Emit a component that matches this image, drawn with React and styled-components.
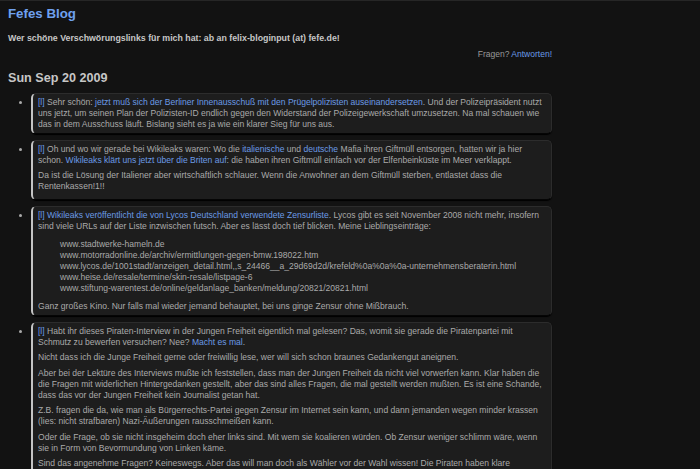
import React from 'react'
import styled, { createGlobalStyle } from 'styled-components'

const GlobalStyle = createGlobalStyle`
  html, body {
    margin: 0;
    background: #121212;
  }
  body {
    border-top: 1px solid #262626;
    font-family: "Liberation Sans", Arial, sans-serif;
    color: #aaa;
  }
  a {
    color: #6b9be6;
    text-decoration: none;
  }
`

const Page = styled.div`
  width: 544px;
  padding: 5px 0 0 8px;
`

const Title = styled.h2`
  margin: 0;
  font-size: 13.3px;
  line-height: 15px;
  font-weight: bold;
  color: #6fa1ef;
`

const Tagline = styled.div`
  margin-top: 12px;
  font-size: 8.8px;
  line-height: 11px;
  font-weight: bold;
  color: #c6c6c6;
`

const Questions = styled.div`
  margin-top: 5px;
  text-align: right;
  font-size: 8.5px;
  line-height: 11px;
  color: #999;
`

const DateHeading = styled.h3`
  margin: 11px 0 0;
  font-size: 12.6px;
  line-height: 14px;
  font-weight: bold;
  color: #c6c6c6;
`

const List = styled.ul`
  margin: 8px 0 0;
  padding: 0 0 0 23px;
  font-size: 8.56px;
  line-height: 11px;
  color: #aaa;
`

const Item = styled.li`
  margin-bottom: 6px;
`

const Box = styled.div`
  background: #1d1d1d;
  border: 1px solid #2c2c2c;
  border-left: 2px solid #c4c4c4;
  border-bottom-color: #050505;
  border-radius: 5px;
  padding: 3px 7px 2.5px 5px;
  box-shadow: 0 1px 1px #000;
`

const Para = styled.p`
  margin: 4.5px 0;
`

const Urls = styled.blockquote`
  margin: 7px 0 7px 22px;
`

const Perm = () => <a href="#">[l]</a>

export default function App() {
  return (
    <>
      <GlobalStyle />
      <Page>
        <Title>Fefes Blog</Title>
        <Tagline>Wer schöne Verschwörungslinks für mich hat: ab an felix-bloginput (at) fefe.de!</Tagline>
        <Questions>Fragen? <a href="#">Antworten!</a></Questions>
        <DateHeading>Sun Sep 20 2009</DateHeading>
        <List>
          <Item>
            <Box>
              <Perm /> Sehr schön: <a href="#">jetzt muß sich der Berliner Innenausschuß mit den Prügelpolizisten auseinandersetzen</a>. Und der Polizeipräsident nutzt uns jetzt, um seinen Plan der Polizisten-ID endlich gegen den Widerstand der Polizeigewerkschaft umzusetzen. Na mal schauen wie das in dem Ausschuss läuft. Bislang sieht es ja wie ein klarer Sieg für uns aus.
            </Box>
          </Item>
          <Item>
            <Box>
              <Perm /> Oh und wo wir gerade bei Wikileaks waren: Wo die <a href="#">italienische</a> und <a href="#">deutsche</a> Mafia ihren Giftmüll entsorgen, hatten wir ja hier schon. <a href="#">Wikileaks klärt uns jetzt über die Briten auf</a>: die haben ihren Giftmüll einfach vor der Elfenbeinküste im Meer verklappt.
              <Para>Da ist die Lösung der Italiener aber wirtschaftlich schlauer. Wenn die Anwohner an dem Giftmüll sterben, entlastet dass die Rentenkassen!1!!</Para>
            </Box>
          </Item>
          <Item>
            <Box>
              <Perm /> <a href="#">Wikileaks veröffentlicht die von Lycos Deutschland verwendete Zensurliste</a>. Lycos gibt es seit November 2008 nicht mehr, insofern sind viele URLs auf der Liste inzwischen futsch. Aber es lässt doch tief blicken. Meine Lieblingseinträge:
              <Urls>
                www.stadtwerke-hameln.de<br />
                www.motorradonline.de/archiv/ermittlungen-gegen-bmw.198022.htm<br />
                www.lycos.de/1001stadt/anzeigen_detail.html,,s_24466__a_29d69d2d/krefeld%0a%0a%0a-unternehmensberaterin.html<br />
                www.heise.de/resale/termine/skin-resale/listpage-6<br />
                www.stiftung-warentest.de/online/geldanlage_banken/meldung/20821/20821.html
              </Urls>
              Ganz großes Kino. Nur falls mal wieder jemand behauptet, bei uns ginge Zensur ohne Mißbrauch.
            </Box>
          </Item>
          <Item>
            <Box>
              <Perm /> Habt ihr dieses Piraten-Interview in der Jungen Freiheit eigentlich mal gelesen? Das, womit sie gerade die Piratenpartei mit Schmutz zu bewerfen versuchen? Nee? <a href="#">Macht es mal</a>.
              <Para>Nicht dass ich die Junge Freiheit gerne oder freiwillig lese, wer will sich schon braunes Gedankengut aneignen.</Para>
              <Para>Aber bei der Lektüre des Interviews mußte ich feststellen, dass man der Jungen Freiheit da nicht viel vorwerfen kann. Klar haben die die Fragen mit widerlichen Hintergedanken gestellt, aber das sind alles Fragen, die mal gestellt werden mußten. Es ist eine Schande, dass das vor der Jungen Freiheit kein Journalist getan hat.</Para>
              <Para>Z.B. fragen die da, wie man als Bürgerrechts-Partei gegen Zensur im Internet sein kann, und dann jemanden wegen minder krassen (lies: nicht strafbaren) Nazi-Äußerungen rausschmeißen kann.</Para>
              <Para>Oder die Frage, ob sie nicht insgeheim doch eher links sind. Mit wem sie koalieren würden. Ob Zensur weniger schlimm wäre, wenn sie in Form von Bevormundung von Linken käme.</Para>
              <Para>Sind das angenehme Fragen? Keineswegs. Aber das will man doch als Wähler vor der Wahl wissen! Die Piraten haben klare Antworten gegeben.</Para>
            </Box>
          </Item>
        </List>
      </Page>
    </>
  )
}
